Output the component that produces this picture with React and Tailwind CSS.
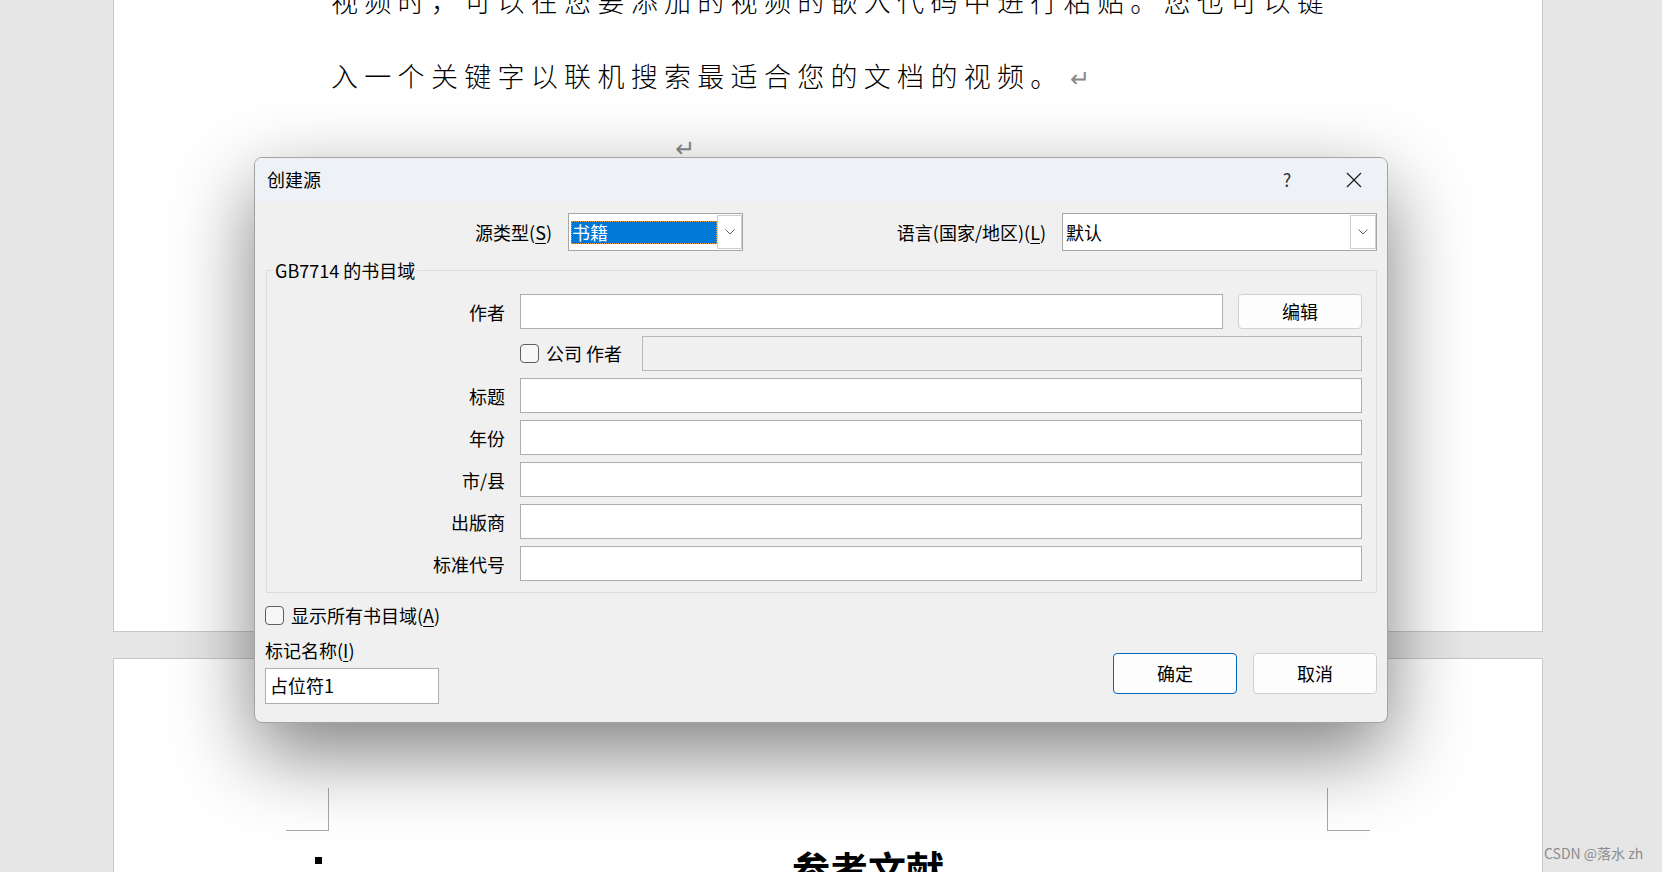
import React from 'react';

const ui = "font-['Noto_Sans_CJK_SC','Noto_Sans',sans-serif]";

function Chevron() {
  return (
    <svg width="10" height="6" viewBox="0 0 10 6">
      <path d="M0.5 0.5 L5 5 L9.5 0.5" fill="none" stroke="#606060" strokeWidth="1" />
    </svg>
  );
}

function CloseIcon() {
  return (
    <svg width="16" height="16" viewBox="0 0 16 16">
      <path d="M1 1 L15 15 M15 1 L1 15" stroke="#1a1a1a" strokeWidth="1.2" />
    </svg>
  );
}

function Checkbox() {
  return <div className="w-[19px] h-[19px] shrink-0 rounded-[4px] border border-[#5f5f5f] bg-[#f7f7f7]" />;
}

// one labelled line inside the group box
function Row({ label, children }) {
  return (
    <div className="flex items-center h-[35px]">
      <div className="w-[238px] text-right leading-[24px]">{label}</div>
      <div className="ml-[15px] flex-1 flex items-center h-full">{children}</div>
    </div>
  );
}

function Field() {
  return <div className="flex-1 h-full bg-white border border-[#adadad]" />;
}

function Key({ children }) {
  return <span className="underline underline-offset-[3px] decoration-1">{children}</span>;
}

export default function App() {
  return (
    <div className="relative w-[1662px] h-[872px] overflow-hidden bg-[#e6e6e6]">
      {/* page 1 */}
      <div className="ml-[113px] w-[1430px] h-[632px] bg-white border-x border-b border-[#c8c8c8] overflow-hidden">
        <div className={`-mt-[37px] pl-[217px] ${ui} font-light text-[27px] tracking-[6.3px] leading-[75px] whitespace-nowrap text-black`}>
          <div>视频时，可以在您要添加的视频的嵌入代码中进行粘贴。您也可以键</div>
          <div>
            入一个关键字以联机搜索最适合您的文档的视频。
            <span className="ml-[6px] font-['DejaVu_Sans',sans-serif] text-[24px] tracking-normal text-[#8a8a8a]">↵</span>
          </div>
        </div>
        <div className="pl-[561px] mt-[20px] leading-[24px] font-['DejaVu_Sans',sans-serif] text-[24px] text-[#8a8a8a]">↵</div>
      </div>

      {/* page 2 */}
      <div className="ml-[113px] mt-[26px] w-[1430px] h-[300px] bg-white border-x border-t border-[#c8c8c8]">
        <div className="mt-[129px] px-[172px] flex justify-between">
          <div className="w-[43px] h-[43px] border-r border-b border-[#a8a8a8]" />
          <div className="w-[43px] h-[43px] border-l border-b border-[#a8a8a8]" />
        </div>
        <div className="mt-[18px] pl-[201px] flex items-start">
          <div className="w-[7px] h-[7px] mt-[8px] bg-black" />
          <div className={`ml-[470px] ${ui} text-[38px] font-bold leading-[38px] text-black`}>参考文献</div>
        </div>
      </div>

      <div className={`absolute left-[1544px] top-[843px] ${ui} text-[14px] leading-[20px] text-[#8c8c8c]`}>CSDN @落水 zh</div>

      {/* dialog */}
      <div className={`absolute left-[254px] top-[157px] w-[1134px] flex flex-col rounded-[8px] border border-[#a3a3a3] bg-[#f0f0f0] overflow-hidden shadow-[0_30px_80px_rgba(0,0,0,0.5)] ${ui} text-[18px] text-black`}>
        <div className="h-[44px] shrink-0 bg-[#eef2f7] flex items-center">
          <span className="pl-[12px] leading-[24px] -mt-[2px]">创建源</span>
          <div className="ml-auto flex h-full">
            <div className="w-[68px] flex items-center justify-center text-[#333] -mt-[2px]">?</div>
            <div className="w-[66px] flex items-center justify-center">
              <CloseIcon />
            </div>
          </div>
        </div>

        <div className="flex flex-col px-[10px] pb-[18px]">
          <div className="mt-[11px] flex items-center h-[38px]">
            <div className="w-[287px] text-right leading-[24px]">
              源类型(<Key>S</Key>)
            </div>
            <div className="ml-[16px] w-[175px] h-full flex items-center border border-[#a6a6a6] bg-white">
              <div className="ml-[2px] w-[146px] h-[23px] bg-[#0078d7] text-white leading-[23px] pl-[1px] outline-1 outline-dotted outline-[#e89a3c] -outline-offset-1">
                书籍
              </div>
              <div className="ml-auto w-[25px] h-[34px] flex items-center justify-center border border-[#cfcfcf] bg-white">
                <Chevron />
              </div>
            </div>
            <div className="flex-1 text-right leading-[24px]">
              语言(国家/地区)(<Key>L</Key>)
            </div>
            <div className="ml-[16px] w-[315px] h-full flex items-center border border-[#a6a6a6] bg-white">
              <span className="pl-[3px] leading-[24px]">默认</span>
              <div className="ml-auto w-[26px] h-[34px] flex items-center justify-center border border-[#cfcfcf] bg-white">
                <Chevron />
              </div>
            </div>
          </div>

          <div className="relative mt-[19px] ml-[1px] border border-[#dcdcdc] pt-[23px] pb-[11px] pr-[14px] flex flex-col gap-[7px]">
            <div className="absolute -top-[13px] left-[6px] px-[2px] bg-[#f0f0f0] leading-[24px]">GB7714 的书目域</div>
            <Row label="作者">
              <Field />
              <div className="ml-[15px] w-[124px] h-full flex items-center justify-center rounded-[4px] border border-[#d0d0d0] bg-[#fdfdfd]">
                编辑
              </div>
            </Row>
            <Row label="">
              <Checkbox />
              <span className="ml-[7px] leading-[24px] -mt-[2px]">公司 作者</span>
              <div className="ml-auto w-[720px] h-full bg-[#f0f0f0] border border-[#b9b9b9]" />
            </Row>
            <Row label="标题">
              <Field />
            </Row>
            <Row label="年份">
              <Field />
            </Row>
            <Row label="市/县">
              <Field />
            </Row>
            <Row label="出版商">
              <Field />
            </Row>
            <Row label="标准代号">
              <Field />
            </Row>
          </div>

          <div className="flex items-end">
            <div className="flex flex-col">
              <div className="mt-[12px] flex items-center h-[20px]">
                <Checkbox />
                <span className="ml-[7px] leading-[20px]">
                  显示所有书目域(<Key>A</Key>)
                </span>
              </div>
              <div className="mt-[13px] leading-[24px]">
                标记名称(<Key>I</Key>)
              </div>
              <div className="mt-[6px] w-[174px] h-[36px] bg-white border border-[#adadad] pl-[4px] leading-[32px]">占位符1</div>
            </div>
            <div className="ml-auto mb-[10px] flex gap-[16px]">
              <div className="w-[124px] h-[41px] flex items-center justify-center rounded-[4px] border border-[#0067c0] bg-[#fdfdfd]">
                确定
              </div>
              <div className="w-[124px] h-[41px] flex items-center justify-center rounded-[4px] border border-[#d0d0d0] bg-[#fdfdfd]">
                取消
              </div>
            </div>
          </div>
        </div>
      </div>
    </div>
  );
}
